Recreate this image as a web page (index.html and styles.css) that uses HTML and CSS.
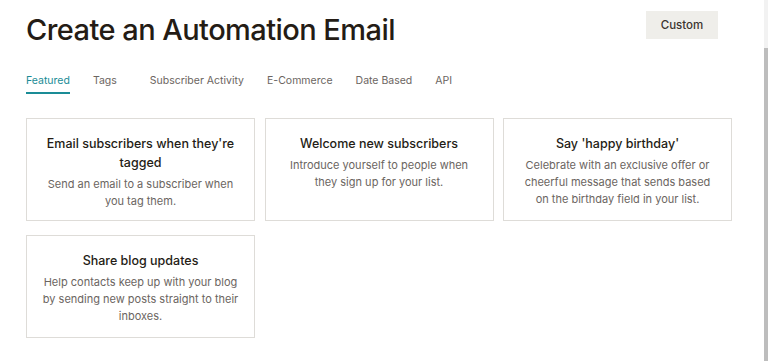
FILE: index.html
```html
<!DOCTYPE html>
<html lang="en">
<head>
<meta charset="utf-8">
<title>Create an Automation Email</title>
<link rel="stylesheet" href="styles.css">
</head>
<body>
<div class="page">
  <main class="content">
    <header class="head">
      <h1 class="title">Create an Automation Email</h1>
      <button class="btn-custom" type="button">Custom</button>
    </header>
    <nav class="tabs">
      <a class="tab tab-active">Featured</a>
      <a class="tab tab-tags">Tags</a>
      <a class="tab">Subscriber Activity</a>
      <a class="tab">E-Commerce</a>
      <a class="tab">Date Based</a>
      <a class="tab">API</a>
    </nav>
    <section class="grid">
      <div class="card">
        <h2 class="card-title">Email subscribers when they're tagged</h2>
        <p class="card-desc">Send an email to a subscriber when you tag them.</p>
      </div>
      <div class="card">
        <h2 class="card-title">Welcome new subscribers</h2>
        <p class="card-desc">Introduce yourself to people when they sign up for your list.</p>
      </div>
      <div class="card">
        <h2 class="card-title">Say 'happy birthday'</h2>
        <p class="card-desc">Celebrate with an exclusive offer or cheerful message that sends based on the birthday field in your list.</p>
      </div>
      <div class="card">
        <h2 class="card-title">Share blog updates</h2>
        <p class="card-desc">Help contacts keep up with your blog by sending new posts straight to their inboxes.</p>
      </div>
    </section>
  </main>
  <div class="scrollbar"><div class="thumb"></div></div>
</div>
</body>
</html>
```

FILE: styles.css
```css
* { box-sizing: border-box; }
html, body { margin: 0; padding: 0; background: #fff; }
body { font-family: "Inter", "Liberation Sans", sans-serif; color: #241c15; }

.page {
  display: flex;
  height: 361px;
  overflow: hidden;
}
.content {
  flex: 1;
  padding: 0 0 0 26px;
}
.head {
  display: flex;
  justify-content: space-between;
  align-items: flex-start;
  width: 692px;
  padding-top: 11px;
}
.title {
  margin: 2px 0 0;
  font-size: 29px;
  font-weight: 500;
  letter-spacing: -0.55px;
  line-height: 34px;
  color: #241c15;
}
.btn-custom {
  width: 72px;
  height: 28px;
  border: 0;
  background: #efeeea;
  color: #3b3430;
  font-family: inherit;
  font-size: 11.5px;
  font-weight: 500;
  padding: 0;
}
.tabs {
  display: flex;
  gap: 23px;
  margin-top: 27px;
  height: 20px;
}
.tab {
  font-size: 10.5px;
  color: #6b6561;
  line-height: 13px;
  height: 20px;
}
.tab-tags { margin-right: 10px; }
.tab-active {
  color: #1a8c96;
  border-bottom: 2px solid #1a8c96;
}
.grid {
  display: grid;
  grid-template-columns: repeat(3, 229px);
  column-gap: 9.5px;
  row-gap: 14px;
  margin-top: 24px;
}
.card {
  border: 1px solid #dedcd8;
  padding: 15px 14px 10px;
  text-align: center;
  min-height: 103px;
}
.card-title {
  margin: 0;
  font-size: 12.5px;
  font-weight: 500;
  line-height: 19px;
  color: #241c15;
}
.card-desc {
  margin: 4px 0 0;
  font-size: 11px;
  line-height: 17px;
  color: #6b6561;
}
.scrollbar {
  width: 4px;
  background: #f2f2f2;
  display: flex;
  flex-direction: column;
  padding-top: 48px;
}
.thumb {
  flex: 1;
  background: #bdbdbd;
}
```
